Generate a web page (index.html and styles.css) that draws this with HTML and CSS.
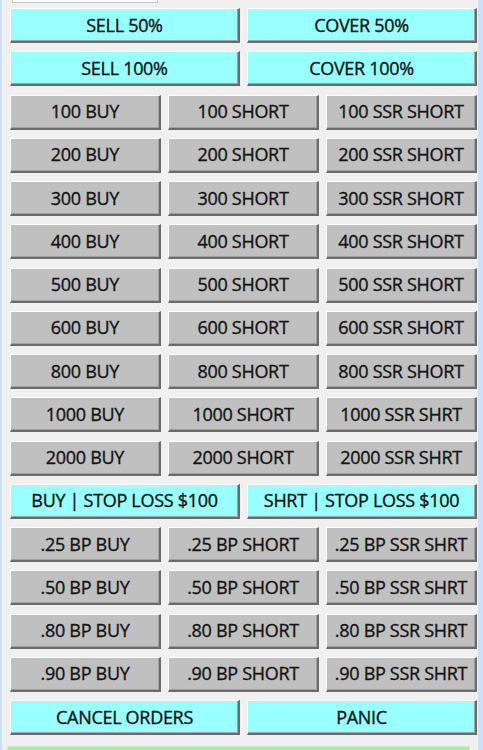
FILE: index.html
```html
<!DOCTYPE html>
<html>
<head>
<meta charset="utf-8">
<link rel="stylesheet" href="styles.css">
</head>
<body>
<div class="window">
  <div class="top-stub"></div>
  <div class="panel">
    <div class="row"><div class="btn cyan">SELL 50%</div><div class="btn cyan">COVER 50%</div></div>
    <div class="row"><div class="btn cyan">SELL 100%</div><div class="btn cyan">COVER 100%</div></div>
    <div class="row"><div class="btn">100 BUY</div><div class="btn">100 SHORT</div><div class="btn">100 SSR SHORT</div></div>
    <div class="row"><div class="btn">200 BUY</div><div class="btn">200 SHORT</div><div class="btn">200 SSR SHORT</div></div>
    <div class="row"><div class="btn">300 BUY</div><div class="btn">300 SHORT</div><div class="btn">300 SSR SHORT</div></div>
    <div class="row"><div class="btn">400 BUY</div><div class="btn">400 SHORT</div><div class="btn">400 SSR SHORT</div></div>
    <div class="row"><div class="btn">500 BUY</div><div class="btn">500 SHORT</div><div class="btn">500 SSR SHORT</div></div>
    <div class="row"><div class="btn">600 BUY</div><div class="btn">600 SHORT</div><div class="btn">600 SSR SHORT</div></div>
    <div class="row"><div class="btn">800 BUY</div><div class="btn">800 SHORT</div><div class="btn">800 SSR SHORT</div></div>
    <div class="row"><div class="btn">1000 BUY</div><div class="btn">1000 SHORT</div><div class="btn">1000 SSR SHRT</div></div>
    <div class="row"><div class="btn">2000 BUY</div><div class="btn">2000 SHORT</div><div class="btn">2000 SSR SHRT</div></div>
    <div class="row"><div class="btn cyan">BUY | STOP LOSS $100</div><div class="btn cyan">SHRT | STOP LOSS $100</div></div>
    <div class="row"><div class="btn">.25 BP BUY</div><div class="btn">.25 BP SHORT</div><div class="btn">.25 BP SSR SHRT</div></div>
    <div class="row"><div class="btn">.50 BP BUY</div><div class="btn">.50 BP SHORT</div><div class="btn">.50 BP SSR SHRT</div></div>
    <div class="row"><div class="btn">.80 BP BUY</div><div class="btn">.80 BP SHORT</div><div class="btn">.80 BP SSR SHRT</div></div>
    <div class="row"><div class="btn">.90 BP BUY</div><div class="btn">.90 BP SHORT</div><div class="btn">.90 BP SSR SHRT</div></div>
    <div class="row"><div class="btn cyan">CANCEL ORDERS</div><div class="btn cyan">PANIC</div></div>
  </div>
  <div class="status-bar"></div>
</div>
</body>
</html>
```
FILE: styles.css
```css
html, body {
  margin: 0;
  padding: 0;
  background: #f0f0f0;
}
.window {
  width: 483px;
  height: 750px;
  box-sizing: border-box;
  background: #f0f0f0;
  border-left: 2px solid #cfdff3;
  border-right: 5px solid #cfdff3;
  overflow: hidden;
  position: relative;
}
.top-stub {
  position: absolute;
  top: -3px;
  left: 10px;
  width: 144px;
  height: 4px;
  background: #fafafa;
  border: 1px solid #c8c8c8;
}
.panel {
  display: flex;
  flex-direction: column;
  gap: 8.25px;
  padding: 8px 0 0 8px;
  width: 467px;
}
.row {
  display: flex;
  gap: 7px;
  height: 35px;
}
.btn {
  flex: 1 1 0;
  min-width: 0;
  box-sizing: border-box;
  display: flex;
  align-items: center;
  justify-content: center;
  background: #c0c0c0;
  border-top: 1px solid #ffffff;
  border-left: 1px solid #ffffff;
  border-right: 2px solid #6b6b6b;
  border-bottom: 2px solid #6b6b6b;
  box-shadow: inset -1px -1px 0 #a0a0a0;
  font-family: "Open Sans", "Liberation Sans", sans-serif;
  font-size: 18px;
  letter-spacing: -0.3px;
  color: #141414;
  -webkit-text-stroke: 0.35px #141414;
  white-space: nowrap;
  overflow: hidden;
  padding-bottom: 1px;
}
.btn.cyan {
  background: #99ffff;
}
.status-bar {
  position: absolute;
  left: 5px;
  bottom: -6px;
  width: 461px;
  height: 8px;
  background: #a6f0a0;
  border: 1px solid #c8f0c0;
}
```
